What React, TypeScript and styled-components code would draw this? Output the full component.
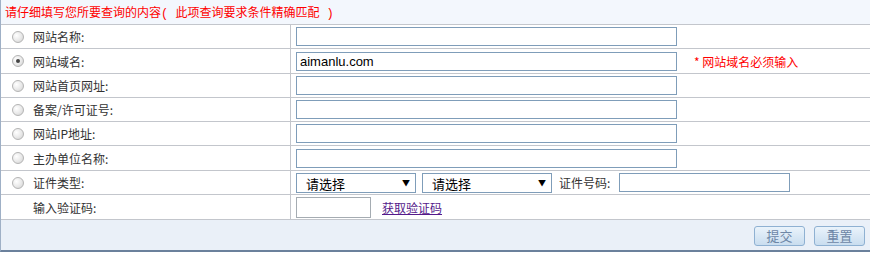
import React from "react";
import styled, { createGlobalStyle } from "styled-components";

const Global = createGlobalStyle`
  html, body { margin: 0; padding: 0; background: #fff; }
  body { font-family: "Noto Sans CJK SC", "Liberation Sans", sans-serif; font-size: 12px; color: #333; }
`;

const Panel = styled.div`
  width: 870px;
  box-sizing: border-box;
  border-left: 1px solid #9fb0c6;
  border-bottom: 2px solid #6b819c;
`;

const Header = styled.div`
  height: 24px;
  border-bottom: 1px solid #c3c6cc;
  background: #f3f7fd;
  color: #f00;
  display: flex;
  align-items: center;
  padding-left: 4px;
  font-family: "Liberation Mono", "Noto Sans CJK SC", monospace;
  font-size: 12px;
`;

const Row = styled.div<{ $h: number }>`
  display: flex;
  height: ${(p) => p.$h - 1}px;
  border-bottom: 1px solid #c3c6cc;
`;

const LabelCell = styled.div`
  width: 290px;
  flex: none;
  border-right: 1px solid #c3c6cc;
  display: flex;
  align-items: center;
  padding-left: 11px;
  gap: 8px;
  box-sizing: border-box;
`;

const Radio = styled.span<{ $checked?: boolean; $hidden?: boolean }>`
  width: 12px;
  height: 12px;
  border-radius: 50%;
  box-sizing: border-box;
  border: 1px solid #b4b4b4;
  background: radial-gradient(circle at 35% 35%, #ffffff 0%, #e8e8e8 55%, #cfcfcf 100%);
  display: inline-flex;
  align-items: center;
  justify-content: center;
  visibility: ${(p) => (p.$hidden ? "hidden" : "visible")};
  &::after {
    content: "";
    width: 4px;
    height: 4px;
    border-radius: 50%;
    background: #444;
    display: ${(p) => (p.$checked ? "block" : "none")};
  }
`;

const Label = styled.span`
  color: #333;
  font-size: 12px;
  margin-left: 1px;
`;

const ValueCell = styled.div`
  flex: 1;
  display: flex;
  align-items: center;
  padding-left: 5px;
  gap: 6px;
`;

const TextInput = styled.input<{ $w: number; $light?: boolean }>`
  width: ${(p) => p.$w}px;
  height: 19px;
  box-sizing: border-box;
  border: 1px solid ${(p) => (p.$light ? "#a5acb2" : "#7f9db9")};
  padding: 0 3px;
  margin: 0;
  font-family: "Liberation Sans", Arial, sans-serif;
  font-size: 13px;
  color: #000;
  outline: none;
  background: #fff;
`;

const CaptchaInput = styled(TextInput)`
  height: 21px;
`;

const Note = styled.span`
  color: #f00;
  font-size: 12px;
  margin-left: 11px;
`;

const SelectWrap = styled.span<{ $w: number }>`
  position: relative;
  display: inline-block;
  width: ${(p) => p.$w}px;
  height: 20px;
`;

const Select = styled.select`
  appearance: none;
  -webkit-appearance: none;
  width: 100%;
  height: 100%;
  box-sizing: border-box;
  border: 1px solid #7f9db9;
  background: #fff;
  padding: 0 0 0 9px;
  margin: 0;
  font-family: "Noto Sans CJK SC", sans-serif;
  font-size: 13px;
  color: #000;
  outline: none;
`;

const Arrow = styled.span`
  position: absolute;
  right: 6px;
  top: 4px;
  font-size: 8px;
  color: #000;
  pointer-events: none;
  line-height: 12px;
`;

const InlineLabel = styled.span`
  color: #333;
  font-size: 12px;
  margin-left: 1px;
  margin-right: 3px;
`;

const Link = styled.a`
  color: #551a8b;
  text-decoration: underline;
  font-size: 12px;
  margin-left: 5px;
  cursor: pointer;
`;

const Footer = styled.div`
  height: 30px;
  background: #eaf0f8;
  display: flex;
  align-items: center;
  justify-content: flex-end;
  padding-right: 5px;
  gap: 9px;
`;

const Button = styled.button`
  width: 51px;
  height: 20px;
  box-sizing: border-box;
  border: 1px solid #8fb1d2;
  border-radius: 3px;
  background: linear-gradient(#eaf3fb, #c9ddef);
  color: #6d86a6;
  font-family: "Noto Sans CJK SC", sans-serif;
  font-size: 13px;
  line-height: 16px;
  padding: 0;
  margin-top: 1px;
`;

const fields: { label: string; checked?: boolean; value?: string; note?: string; h: number }[] = [
  { label: "网站名称:", h: 24 },
  { label: "网站域名:", checked: true, value: "aimanlu.com", note: "* 网站域名必须输入", h: 25 },
  { label: "网站首页网址:", h: 24 },
  { label: "备案/许可证号:", h: 24 },
  { label: "网站IP地址:", h: 24 },
  { label: "主办单位名称:", h: 25 },
];

export default function App() {
  return (
    <>
      <Global />
      <Panel>
        <Header>请仔细填写您所要查询的内容( 此项查询要求条件精确匹配 )</Header>
        {fields.map((f) => (
          <Row key={f.label} $h={f.h}>
            <LabelCell>
              <Radio $checked={f.checked} />
              <Label>{f.label}</Label>
            </LabelCell>
            <ValueCell>
              <TextInput $w={381} defaultValue={f.value ?? ""} />
              {f.note && <Note>{f.note}</Note>}
            </ValueCell>
          </Row>
        ))}
        <Row $h={24}>
          <LabelCell>
            <Radio />
            <Label>证件类型:</Label>
          </LabelCell>
          <ValueCell>
            <SelectWrap $w={120}>
              <Select defaultValue="">
                <option value="">请选择</option>
              </Select>
              <Arrow>▼</Arrow>
            </SelectWrap>
            <SelectWrap $w={130}>
              <Select defaultValue="">
                <option value="">请选择</option>
              </Select>
              <Arrow>▼</Arrow>
            </SelectWrap>
            <InlineLabel>证件号码:</InlineLabel>
            <TextInput $w={171} />
          </ValueCell>
        </Row>
        <Row $h={25}>
          <LabelCell>
            <Radio $hidden />
            <Label>输入验证码:</Label>
          </LabelCell>
          <ValueCell>
            <CaptchaInput $w={75} $light />
            <Link>获取验证码</Link>
          </ValueCell>
        </Row>
        <Footer>
          <Button>提交</Button>
          <Button>重置</Button>
        </Footer>
      </Panel>
    </>
  );
}
